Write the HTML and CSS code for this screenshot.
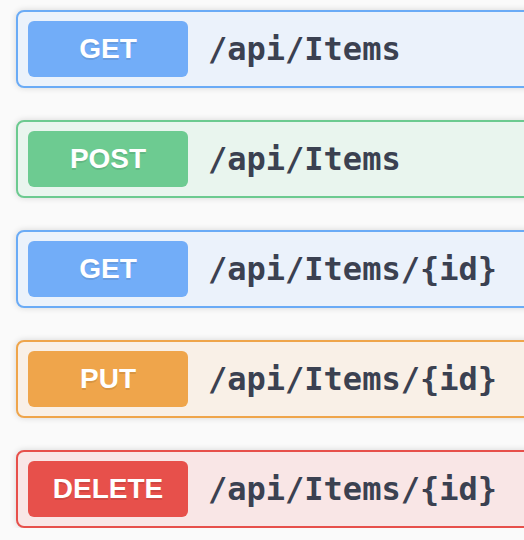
FILE: index.html
```html
<!DOCTYPE html>
<html>
<head>
<meta charset="utf-8">
<link rel="stylesheet" href="styles.css">
</head>
<body>
<div class="list">
  <div class="op op-get"><span class="method">GET</span><span class="path">/api/Items</span></div>
  <div class="op op-post"><span class="method">POST</span><span class="path">/api/Items</span></div>
  <div class="op op-get"><span class="method">GET</span><span class="path">/api/Items/{id}</span></div>
  <div class="op op-put"><span class="method">PUT</span><span class="path">/api/Items/{id}</span></div>
  <div class="op op-delete"><span class="method">DELETE</span><span class="path">/api/Items/{id}</span></div>
</div>
</body>
</html>
```
FILE: styles.css
```css
html, body {
  margin: 0;
  padding: 0;
  background: #fafafa;
  overflow: hidden;
}
.list {
  display: flex;
  flex-direction: column;
  gap: 32px;
  padding: 10px 0 0 16px;
  width: 620px;
}
.op {
  display: flex;
  align-items: center;
  padding: 9px 10px;
  border: 2px solid;
  border-radius: 8px;
  box-shadow: 0 0 6px rgba(0,0,0,0.15);
}
.method {
  width: 160px;
  height: 56px;
  border-radius: 6px;
  display: flex;
  align-items: center;
  justify-content: center;
  color: #fff;
  font-family: "Liberation Sans", Arial, sans-serif;
  font-weight: bold;
  font-size: 28px;
  text-shadow: 0 2px 0 rgba(0,0,0,0.1);
  flex: none;
}
.path {
  padding: 0 20px;
  font-family: "DejaVu Sans Mono", monospace;
  font-weight: bold;
  font-size: 32px;
  color: #3b4151;
}
.op-get { background: #ebf2fb; border-color: #6aabf6; }
.op-get .method { background: #72adf8; }
.op-post { background: #e9f5ee; border-color: #6cca90; }
.op-post .method { background: #6dcb91; }
.op-put { background: #f9f0e7; border-color: #efa54b; }
.op-put .method { background: #efa54b; }
.op-delete { background: #f9e6e6; border-color: #e7504b; }
.op-delete .method { background: #e7504b; }
```
